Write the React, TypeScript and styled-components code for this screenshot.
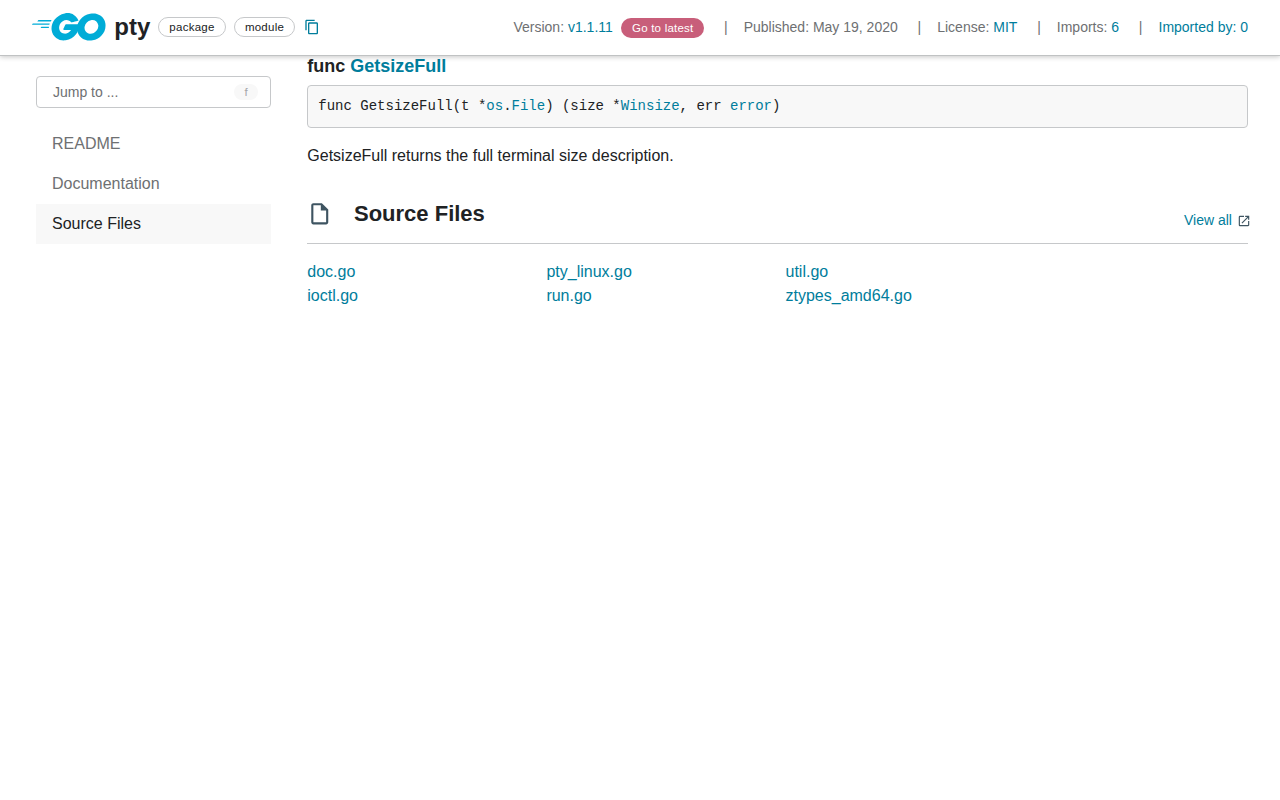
import React from 'react';
import styled, { createGlobalStyle } from 'styled-components';
import { MdContentCopy } from 'react-icons/md';

const GlobalStyle = createGlobalStyle`
  *, *::before, *::after { box-sizing: border-box; }
  body {
    margin: 0;
    background: #fff;
    color: #202224;
    font: 16px/24px "Liberation Sans", Arial, sans-serif;
  }
`;

const Link = styled.a`
  color: #007d9c;
  text-decoration: none;
`;

const Header = styled.header`
  position: relative;
  z-index: 1;
  display: flex;
  align-items: center;
  height: 55px;
  padding: 0 32px 1px;
  background: #fff;
  box-shadow: 0 1px 0 #c0c2c3, 0 2px 5px rgba(0, 0, 0, 0.22);
`;

const Logo = styled.svg`
  width: 73.5px;
  height: 28px;
  fill: #00acd7;
`;

const PackageName = styled.h1`
  margin: 0 7.7px 0 8.8px;
  font-size: 24px;
  line-height: 32px;
`;

const Chip = styled.span<{ $width: number }>`
  width: ${(p) => p.$width}px;
  height: 20px;
  margin-right: 8px;
  border: 1px solid #c6c8ca;
  border-radius: 10px;
  font-size: 11.5px;
  letter-spacing: 0.25px;
  line-height: 18px;
  text-align: center;
`;

const CopyIcon = styled(MdContentCopy)`
  width: 16px;
  height: 16px;
  margin-left: 1px;
  color: #007d9c;
`;

const Details = styled.div`
  display: flex;
  align-items: center;
  margin-left: auto;
  color: #6e7072;
  font-size: 14px;
  line-height: 20px;
  white-space: pre;
`;

const Divider = styled.span`
  margin: 0 16px 0 19.8px;
`;

const LatestButton = styled.a`
  width: 83px;
  height: 20px;
  margin: 1px 0 0 8.4px;
  border-radius: 10px;
  background: #c85e7a;
  color: #fff;
  font-size: 11.5px;
  letter-spacing: 0.22px;
  line-height: 20px;
  text-align: center;
`;

const Page = styled.div`
  display: grid;
  grid-template-columns: 235px 940.7px;
  column-gap: 36.3px;
  padding-left: 36px;
`;

const Sidebar = styled.aside`
  padding-top: 21px;
`;

const JumpBox = styled.div`
  display: flex;
  align-items: center;
  justify-content: space-between;
  height: 32px;
  margin-bottom: 16px;
  padding: 0 12px 0 16px;
  border: 1px solid #c6c8ca;
  border-radius: 4px;
  color: #6e7072;
  font-size: 14px;
`;

const KeyHint = styled.kbd`
  width: 24px;
  height: 16px;
  border-radius: 8px;
  background: #f8f8f8;
  color: #a4a6a8;
  font: 11.5px/16px "Liberation Sans", Arial, sans-serif;
  text-align: center;
`;

const NavItem = styled.a<{ $active?: boolean }>`
  display: block;
  height: 40px;
  padding-left: 16px;
  line-height: 40px;
  color: ${(p) => (p.$active ? '#202224' : '#6e7072')};
  background: ${(p) => (p.$active ? '#f8f8f8' : 'transparent')};
`;

const FuncTitle = styled.h4`
  margin: 0 0 7px;
  font-size: 18px;
  line-height: 23px;
`;

const Declaration = styled.pre`
  height: 43px;
  margin: 0;
  padding: 10px;
  border: 1px solid #c6c8ca;
  border-radius: 4px;
  background: #f8f8f8;
  font: 14px/20px "Liberation Mono", monospace;
`;

const Description = styled.p`
  margin: 16px 0 0;
`;

const SectionHeader = styled.div`
  display: flex;
  align-items: center;
  height: 60px;
  margin-top: 16px;
  border-bottom: 1px solid #c6c8ca;
`;

const DocumentIcon = styled.svg`
  width: 25.5px;
  height: 25.5px;
  margin: 0 21.5px 0 -0.3px;
  fill: #3e5461;
`;

const SectionTitle = styled.h2`
  margin: 0;
  font-size: 22px;
  line-height: 28px;
`;

const ViewAll = styled(Link)`
  display: flex;
  align-items: center;
  gap: 5px;
  margin: 13px -3px 0 auto;
  font-size: 14px;
  line-height: 20px;
`;

const LaunchIcon = styled.svg`
  width: 14px;
  height: 14px;
  margin-top: 2px;
  fill: #3e5461;
`;

const FileList = styled.div`
  display: grid;
  grid-template-columns: repeat(3, 223.1px);
  grid-template-rows: repeat(2, 24px);
  grid-auto-flow: column;
  column-gap: 16px;
  margin-top: 16px;
`;

const files = ['doc.go', 'ioctl.go', 'pty_linux.go', 'run.go', 'util.go', 'ztypes_amd64.go'];

export default function App() {
  return (
    <>
      <GlobalStyle />
      <Header>
        <Logo viewBox="24.7 78.4 205.3 76.5">
          <path d="M40.2,101.1c-0.4,0-0.5-0.2-0.3-0.5l2.1-2.7c0.2-0.3,0.7-0.5,1.1-0.5l35.7,0c0.4,0,0.5,0.3,0.3,0.6l-1.7,2.6c-0.2,0.3-0.7,0.6-1,0.6L40.2,101.1z" />
          <path d="M25.1,110.3c-0.4,0-0.5-0.2-0.3-0.5l2.1-2.7c0.2-0.3,0.7-0.5,1.1-0.5l45.6,0c0.4,0,0.6,0.3,0.5,0.6l-0.8,2.4c-0.1,0.4-0.5,0.6-0.9,0.6L25.1,110.3z" />
          <path d="M49.3,119.5c-0.4,0-0.5-0.3-0.3-0.6l1.4-2.5c0.2-0.3,0.6-0.6,1-0.6l20,0c0.4,0,0.6,0.3,0.6,0.7l-0.2,2.4c0,0.4-0.4,0.7-0.7,0.7L49.3,119.5z" />
          <path d="M153.1,99.3c-6.3,1.6-10.6,2.8-16.8,4.4c-1.5,0.4-1.6,0.5-2.9-1c-1.5-1.7-2.6-2.8-4.7-3.8c-6.3-3.1-12.4-2.2-18.1,1.5c-6.8,4.4-10.3,10.9-10.2,19c0.1,8,5.6,14.6,13.5,15.7c6.8,0.9,12.5-1.5,17-6.6c0.9-1.1,1.7-2.3,2.7-3.7c-3.6,0-8.1,0-19.3,0c-2.1,0-2.6-1.3-1.9-3c1.3-3.1,3.7-8.3,5.1-10.9c0.3-0.6,1-1.6,2.5-1.6c5.1,0,23.9,0,36.4,0c-0.2,2.7-0.2,5.4-0.6,8.1c-1.1,7.2-3.8,13.8-8.2,19.6c-7.2,9.5-16.6,15.4-28.5,17c-9.8,1.3-18.9-0.6-26.9-6.6c-7.4-5.6-11.6-13-12.7-22.2c-1.3-10.9,1.9-20.7,8.5-29.3c7.1-9.3,16.5-15.2,28-17.3c9.4-1.7,18.4-0.6,26.5,4.9c5.3,3.5,9.1,8.3,11.6,14.1C154.7,98.5,154.3,99,153.1,99.3z" />
          <path d="M186.2,154.6c-9.1-0.2-17.4-2.8-24.4-8.8c-5.9-5.1-9.6-11.6-10.8-19.3c-1.8-11.3,1.3-21.3,8.1-30.2c7.3-9.6,16.1-14.6,28-16.7c10.2-1.8,19.8-0.8,28.5,5.1c7.9,5.4,12.8,12.7,14.1,22.3c1.7,13.5-2.2,24.5-11.5,33.9c-6.6,6.7-14.7,10.9-24,12.8C191.5,154.2,188.8,154.3,186.2,154.6z M210,114.2c-0.1-1.3-0.1-2.3-0.3-3.3c-1.8-9.9-10.9-15.5-20.4-13.3c-9.3,2.1-15.3,8-17.5,17.4c-1.8,7.8,2,15.7,9.2,18.9c5.5,2.4,11,2.1,16.3-0.6C205.2,129.2,209.5,122.8,210,114.2z" />
        </Logo>
        <PackageName>pty</PackageName>
        <Chip $width={68}>package</Chip>
        <Chip $width={61}>module</Chip>
        <CopyIcon />
        <Details>
          <span>Version: <Link>v1.1.11</Link></span>
          <LatestButton>Go to latest</LatestButton>
          <Divider>|</Divider>
          <span>Published: May 19, 2020</span>
          <Divider>|</Divider>
          <span>License: <Link>MIT</Link></span>
          <Divider>|</Divider>
          <span>Imports: <Link>6</Link></span>
          <Divider>|</Divider>
          <Link>Imported by: 0</Link>
        </Details>
      </Header>
      <Page>
        <Sidebar>
          <JumpBox>
            Jump to ...
            <KeyHint>f</KeyHint>
          </JumpBox>
          <nav>
            <NavItem>README</NavItem>
            <NavItem>Documentation</NavItem>
            <NavItem $active>Source Files</NavItem>
          </nav>
        </Sidebar>
        <main>
          <FuncTitle>func <Link>GetsizeFull</Link></FuncTitle>
          <Declaration>
            func GetsizeFull(t *<Link>os</Link>.<Link>File</Link>) (size *<Link>Winsize</Link>, err <Link>error</Link>)
          </Declaration>
          <Description>GetsizeFull returns the full terminal size description.</Description>
          <SectionHeader>
            <DocumentIcon viewBox="0 0 24 24">
              <path d="M14 2H6c-1.1 0-1.99.9-1.99 2L4 20c0 1.1.89 2 1.99 2H18c1.1 0 2-.9 2-2V8l-6-6zM6 20V4h7v5h5v11H6z" />
            </DocumentIcon>
            <SectionTitle>Source Files</SectionTitle>
            <ViewAll>
              View all
              <LaunchIcon viewBox="0 0 24 24">
                <path d="M19 19H5V5h7V3H5a2 2 0 0 0-2 2v14a2 2 0 0 0 2 2h14c1.1 0 2-.9 2-2v-7h-2v7zM14 3v2h3.59l-9.83 9.83 1.41 1.41L19 6.41V10h2V3h-7z" />
              </LaunchIcon>
            </ViewAll>
          </SectionHeader>
          <FileList>
            {files.map((name) => <Link key={name}>{name}</Link>)}
          </FileList>
        </main>
      </Page>
    </>
  );
}
